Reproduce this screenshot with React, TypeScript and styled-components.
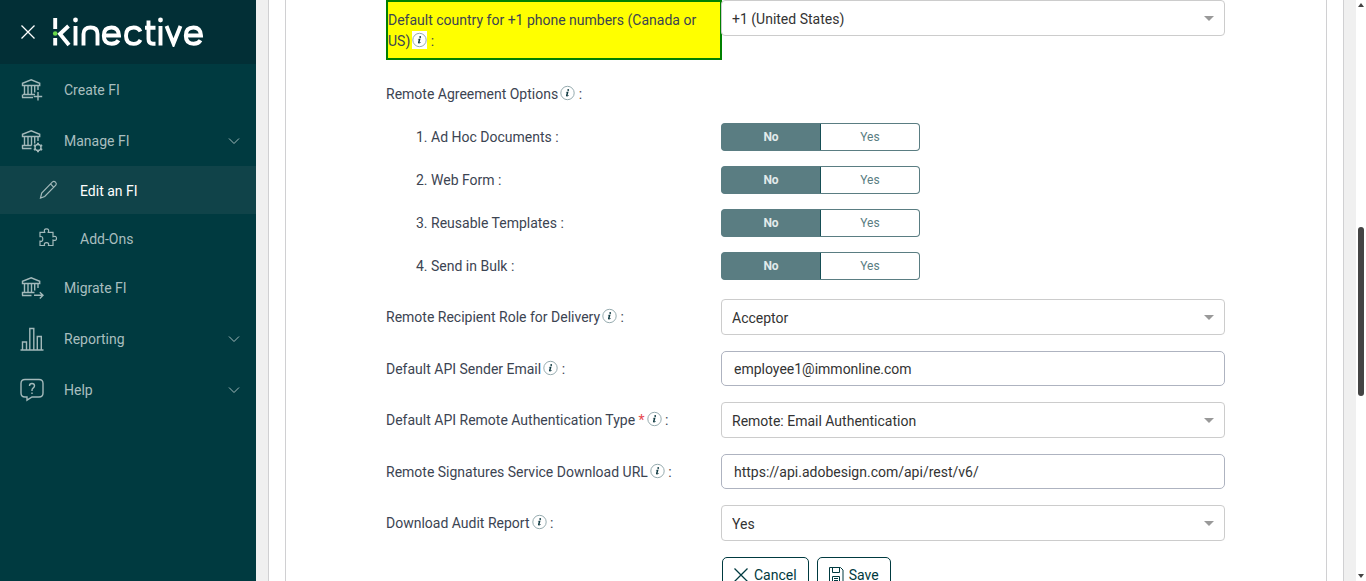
import React, { useId, useState } from "react";
import styled, { createGlobalStyle, css } from "styled-components";

const GlobalStyle = createGlobalStyle`
  *, *::before, *::after { box-sizing: border-box; }
  body {
    margin: 0;
    font-family: Roboto, "Liberation Sans", sans-serif;
    font-size: 14px;
    line-height: 21px;
    color: #3c4452;
    background: #f0f0f0;
  }
  button, input, select { font: inherit; }
`;

const Shell = styled.div`
  display: grid;
  grid-template-columns: 256px minmax(0, 1fr) 10px;
  height: 100vh;
  overflow: hidden;
`;

const Sidebar = styled.aside`
  background: #003a40;
`;

const Brand = styled.div`
  display: flex;
  align-items: center;
  gap: 16px;
  height: 64px;
  padding: 0 20px;
  background: #022f36;
`;

const CloseButton = styled.button`
  display: flex;
  width: 16px;
  height: 16px;
  padding: 0;
  border: 0;
  background: none;
  color: #ffffff;
`;

const NavList = styled.ul`
  margin: 0;
  padding: 0;
  list-style: none;
`;

const NavLink = styled.a<{ $sub?: boolean; $active?: boolean }>`
  display: flex;
  align-items: center;
  gap: 20px;
  height: ${(p) => (p.$sub ? 48 : 51)}px;
  padding: 0 16px 0 ${(p) => (p.$sub ? 36 : 20)}px;
  text-decoration: none;
  color: ${(p) => (p.$active ? "#ffffff" : "#a9bebf")};
  background: ${(p) => (p.$active ? "#104349" : "transparent")};
  svg { flex: none; color: #a3b9ba; }
`;

const NavText = styled.span`
  flex: 1;
  padding-top: 2px;
`;

const Main = styled.main`
  padding: 0 12px;
  background: #f0f0f0;
  overflow: hidden;
`;

const Card = styled.div`
  padding: 0 16px;
  border: solid #d0d0d2;
  border-width: 0 1px;
  background: #ffffff;
`;

const Panel = styled.form`
  display: flex;
  flex-direction: column;
  gap: 16px;
  min-height: 100vh;
  padding: 0 101px 40px 100px;
  border: solid #d0d0d2;
  border-width: 0 1px;
`;

const rowGrid = css`
  display: grid;
  grid-template-columns: 335px minmax(0, 1fr);
  align-items: start;
`;

const Row = styled.div`
  ${rowGrid}
`;

const Label = styled.label<{ $highlight?: boolean }>`
  padding: 8px 0 6px;
  ${(p) =>
    p.$highlight &&
    css`
      margin-right: -1px;
      border: 2px solid #008000;
      background: #ffff00;
    `}
`;

const Required = styled.span`
  color: #e5484d;
`;

const InfoMark = styled.svg`
  width: 15px;
  height: 18px;
  margin-left: 2px;
  vertical-align: -3px;
  background: #ffffff;
`;

const controlBox = css`
  width: 100%;
  background-color: #ffffff;
  color: #333333;
  outline: none;
`;

const SelectWrap = styled.div`
  display: grid;
  align-items: center;
  position: relative;
  &::after {
    content: "";
    position: absolute;
    right: 11px;
    border: solid transparent;
    border-width: 5px 5px 0;
    border-top-color: #999999;
    pointer-events: none;
  }
`;

const Select = styled.select`
  ${controlBox}
  appearance: none;
  height: 36px;
  padding: 2px 32px 0 10px;
  border: 1px solid #cccccc;
  border-radius: 4px;
`;

const Input = styled.input`
  ${controlBox}
  height: 35px;
  padding: 0 12px;
  border: 1px solid #aeb3c0;
  border-radius: 5px;
`;

const Group = styled.fieldset`
  min-width: 0;
  margin: 0;
  padding: 0;
  border: 0;
`;

const Legend = styled.legend`
  padding: 8px 0 7px;
`;

const OptionList = styled.ol`
  display: flex;
  flex-direction: column;
  gap: 15px;
  margin: 0;
  padding: 11px 0 3px;
  list-style: none;
`;

const OptionRow = styled.li`
  ${rowGrid}
  align-items: center;
`;

const OptionLabel = styled.span`
  padding-left: 30px;
`;

const Toggle = styled.div`
  display: grid;
  grid-template-columns: 100px 99px;
  height: 28px;
`;

const ToggleButton = styled.button<{ $on: boolean }>`
  padding: 0;
  border: 1px solid #5a7d82;
  font-size: 12px;
  line-height: 18px;
  font-weight: ${(p) => (p.$on ? 700 : 400)};
  color: ${(p) => (p.$on ? "#e3eaeb" : "#5a7d82")};
  background: ${(p) => (p.$on ? "#5a7d82" : "#ffffff")};
  &:first-child {
    border-right-color: #164e55;
    border-radius: 4px 0 0 4px;
  }
  &:last-child {
    border-left: 0;
    border-radius: 0 4px 4px 0;
  }
`;

const Actions = styled.div`
  grid-column: 2;
  display: flex;
  gap: 8px;
  padding-left: 1px;
`;

const ActionButton = styled.button`
  display: flex;
  align-items: center;
  gap: 5px;
  height: 36px;
  padding: 0 11px 0 10px;
  border: 1px solid #003a40;
  border-radius: 5px;
  background: #ffffff;
  color: #003a40;
`;

const ScrollTrack = styled.div`
  display: flex;
  flex-direction: column;
  align-items: center;
  padding: 3px 0;
  background: #ffffff;
`;

const ScrollArrow = styled.span<{ $down?: boolean }>`
  border: solid transparent;
  border-width: ${(p) => (p.$down ? "4px 3px 0" : "0 3px 4px")};
  border-top-color: ${(p) => (p.$down ? "#444444" : "transparent")};
  border-bottom-color: ${(p) => (p.$down ? "transparent" : "#444444")};
`;

const ScrollSpace = styled.span<{ $grow: number }>`
  flex: ${(p) => p.$grow} 0 0;
`;

const ScrollThumb = styled.span`
  flex: 169 0 0;
  width: 6px;
  border-radius: 3px;
  background: #444444;
`;

const Info = () => (
  <InfoMark viewBox="0 0 15 18" role="img" aria-label="More information">
    <circle cx="7.5" cy="9" r="6.7" fill="#fff" stroke="#8aa2a6" strokeWidth=".9" />
    <circle cx="8.200" cy="6" r=".9" fill="#123c44" />
    <path d="M5.900 7.900l2.700-.4-1 3.700q0 .5 1-.3l.3.300q-1.200 1.500-2.200 1.300-1-.2-.7-1.300l.7-2.500q0-.5-.8-.4z" fill="#123c44" />
  </InfoMark>
);

const Cross = ({ size = 16 }: { size?: number }) => (
  <svg width={size} height={size} viewBox="0 0 16 16" fill="none" stroke="currentColor" strokeWidth="1.3">
    <path d="M1.5 1.5l13 13M14.5 1.5l-13 13" />
  </svg>
);

const Disk = () => (
  <svg width="16" height="16" viewBox="0 0 16 16" fill="none" stroke="currentColor">
    <path d="M1.5 .5h11l2.500 2.500v12.500h-13.500zM4.500 .5v5h7v-5M4.500 15.500v-6h7v6M6 11.500h4M6 13.500h4" />
  </svg>
);

const Chevron = () => (
  <svg width="12" height="8" viewBox="0 0 12 8" fill="none" stroke="currentColor">
    <path d="M1 1.500l5 5 5-5" />
  </svg>
);

const Logo = () => (
  <svg width="152" height="30" viewBox="0 0 152 30" fill="none" stroke="#fff" strokeWidth="3.900" role="img" aria-label="kinective">
    <path d="M3.200 1v11M3.200 21v7.500" />
    <circle cx="3.200" cy="16.500" r="2.300" fill="#6bd94a" stroke="none" />
    <path d="M16.500 9L8 17l9 11" />
    <path d="M23.500 9v19.500M108.500 9v19.500" />
    <circle cx="23.500" cy="3" r="2.400" fill="#fff" stroke="none" />
    <circle cx="108.500" cy="3" r="2.400" fill="#fff" stroke="none" />
    <path d="M31.500 28.500V17q0-6.500 7-6.500t7 6.500v11.500" />
    <path d="M52.300 18.500H67q-.5-8-7.500-8-7.700 0-7.700 8.200 0 8 7.900 8 4.900 0 6.800-3.500" />
    <path d="M88.500 14.500q-2-4-6.800-4-7.700 0-7.700 8.200t7.700 8.200q4.800 0 6.800-4" />
    <path d="M96.500 3.500V22q0 4.700 4.500 4.700h2.500M93 10.800h10.500" />
    <path d="M114.500 9l7 17.500 7-17.500" />
    <path d="M134.300 18.500H149q-.5-8-7.500-8-7.700 0-7.700 8.200 0 8 7.900 8 4.900 0 6.800-3.500" />
  </svg>
);

const BankBase = () => (
  <path d="M2.500 7.500V5.300L11.200 1.800l8.500 3.500v2.200zM4.500 7.500v9M8 7.500v9M11.500 7.500v9M14.700 7.500v7M18 7.500v4.500" />
);

type IconName = "create" | "manage" | "migrate" | "chart" | "help" | "pencil" | "puzzle";

const iconShapes: Record<IconName, React.ReactNode> = {
  create: (
    <>
      <BankBase />
      <path d="M3 16.500h12M2.500 19.500v-3M2 19.500h11M18 14v8.500M13.700 18.500h8.500" />
    </>
  ),
  manage: (
    <>
      <BankBase />
      <path d="M2.500 19.500v-3h9M2 19.500h9.500" />
      <circle cx="18" cy="18.500" r="3" />
      <path d="M18 13.800v1.700M18 21.500v1.700M13.900 16.100l1.500.9M20.600 20l1.500.9M13.900 20.900l1.500-.9M20.600 17l1.500-.9" strokeWidth="2" />
    </>
  ),
  migrate: (
    <>
      <BankBase />
      <path d="M2.500 19.500v-3h12M2 19.500h9.500M14 19.300h9M19.800 16.200l3.200 3.100-3.200 3.200" />
    </>
  ),
  chart: <path d="M.5 23h23M2.500 23v-8h4v8M9.800 23V1.500h4V23M17.300 23V9.500h4V23" />,
  help: (
    <>
      <path d="M5 1.500h14q4 0 4 4V15q0 4-4 4h-7l-5 3.200V19H5q-4 0-4-4V5.500q0-4 4-4z" />
      <path d="M9.500 8q0-2.500 2.500-2.500t2.500 2.300q0 1.200-1.200 2T12 12v1M12 14.500v1.500" />
    </>
  ),
  pencil: <path d="M4.500 20l1.200-5L16.500 3.900q1.500-1.200 3 .3t.3 3L8.700 18.500zM14.500 5.900l3.300 3.500" strokeWidth="1.200" />,
  puzzle: (
    <path
      d="M4 6.300h4.700q-1.300-3.500 1.800-3.500t1.800 3.500h4.700v4.400q3.500-1.100 3.500 1.700T17 14.100v5.400h-4.500q.9-2.800-2-2.800t-2 2.800H4v-4.300q2.800.6 2.800-2.300T4 10.600z"
      strokeWidth="1.200"
    />
  ),
};

const NavIcon = ({ name }: { name: IconName }) => (
  <svg width="24" height="24" viewBox="0 0 24 24" fill="none" stroke="currentColor" strokeWidth="1.400">
    {iconShapes[name]}
  </svg>
);

const navItems: { text: string; icon: IconName; sub?: boolean; active?: boolean; expandable?: boolean }[] = [
  { text: "Create FI", icon: "create" },
  { text: "Manage FI", icon: "manage", expandable: true },
  { text: "Edit an FI", icon: "pencil", sub: true, active: true },
  { text: "Add-Ons", icon: "puzzle", sub: true },
  { text: "Migrate FI", icon: "migrate" },
  { text: "Reporting", icon: "chart", expandable: true },
  { text: "Help", icon: "help", expandable: true },
];

type FieldProps = {
  label: string;
  value: string;
  kind: "select" | "input";
  highlight?: boolean;
  required?: boolean;
};

const Field = ({ label, value, kind, highlight, required }: FieldProps) => {
  const id = useId();
  return (
    <Row>
      <Label htmlFor={id} $highlight={highlight}>
        {label}
        {required && <Required> *</Required>}
        <Info /> :
      </Label>
      {kind === "select" ? (
        <SelectWrap>
          <Select id={id} defaultValue={value}>
            <option>{value}</option>
          </Select>
        </SelectWrap>
      ) : (
        <Input id={id} type="text" defaultValue={value} />
      )}
    </Row>
  );
};

const Option = ({ label }: { label: string }) => {
  const id = useId();
  const [yes, setYes] = useState(false);
  return (
    <OptionRow>
      <OptionLabel id={id}>{label} :</OptionLabel>
      <Toggle role="group" aria-labelledby={id}>
        <ToggleButton type="button" $on={!yes} aria-pressed={!yes} onClick={() => setYes(false)}>
          No
        </ToggleButton>
        <ToggleButton type="button" $on={yes} aria-pressed={yes} onClick={() => setYes(true)}>
          Yes
        </ToggleButton>
      </Toggle>
    </OptionRow>
  );
};

const options = ["1. Ad Hoc Documents", "2. Web Form", "3. Reusable Templates", "4. Send in Bulk"];

export default function App() {
  return (
    <Shell>
      <GlobalStyle />
      <Sidebar>
        <Brand>
          <CloseButton type="button" aria-label="Close menu">
            <Cross />
          </CloseButton>
          <Logo />
        </Brand>
        <nav>
          <NavList>
            {navItems.map((item) => (
              <li key={item.text}>
                <NavLink href="#" $sub={item.sub} $active={item.active}>
                  <NavIcon name={item.icon} />
                  <NavText>{item.text}</NavText>
                  {item.expandable && <Chevron />}
                </NavLink>
              </li>
            ))}
          </NavList>
        </nav>
      </Sidebar>
      <Main>
        <Card>
          <Panel>
            <Field kind="select" label="Default country for +1 phone numbers (Canada or US)" value="+1 (United States)" highlight />
            <Group>
              <Legend>
                Remote Agreement Options
                <Info /> :
              </Legend>
              <OptionList>
                {options.map((text) => (
                  <Option key={text} label={text} />
                ))}
              </OptionList>
            </Group>
            <Field kind="select" label="Remote Recipient Role for Delivery" value="Acceptor" />
            <Field kind="input" label="Default API Sender Email" value="employee1@immonline.com" />
            <Field kind="select" label="Default API Remote Authentication Type" value="Remote: Email Authentication" required />
            <Field kind="input" label="Remote Signatures Service Download URL" value="https://api.adobesign.com/api/rest/v6/" />
            <Field kind="select" label="Download Audit Report" value="Yes" />
            <Row>
              <Actions>
                <ActionButton type="button">
                  <Cross />
                  Cancel
                </ActionButton>
                <ActionButton type="button">
                  <Disk />
                  Save
                </ActionButton>
              </Actions>
            </Row>
          </Panel>
        </Card>
      </Main>
      <ScrollTrack aria-hidden="true">
        <ScrollArrow />
        <ScrollSpace $grow={220} />
        <ScrollThumb />
        <ScrollSpace $grow={178} />
        <ScrollArrow $down />
      </ScrollTrack>
    </Shell>
  );
}
